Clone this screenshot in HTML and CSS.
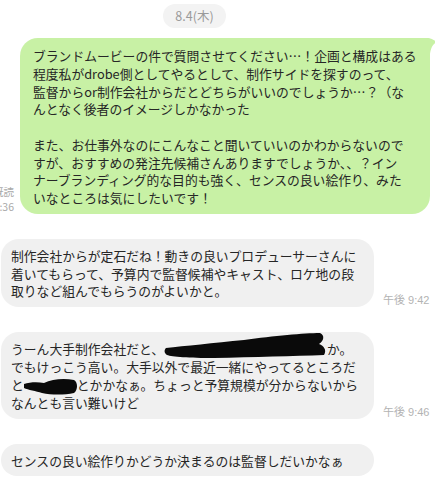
FILE: index.html
```html
<!DOCTYPE html>
<html lang="ja">
<head>
    <meta charset="UTF-8">
    <meta name="viewport" content="width=device-width, initial-scale=1.0">
    <title>トーク</title>
    <link rel="stylesheet" href="styles.css">
</head>
<body>
    <div class="chat">
        <div class="date-row"><span class="date">8.4(木)</span></div>

        <div class="row sent">
            <div class="read">既読<br>9:36</div>
            <div class="bubble green">
                <svg class="tail" width="16" height="16" viewBox="0 0 16 16"><path d="M0 0 H6 C10 0 13 2 16 4 C12 6 10 9 9 16 H0 Z"/></svg>
                ブランドムービーの件で質問させてください…！企画と構成はある<br>
                程度私がdrobe側としてやるとして、制作サイドを探すのって、<br>
                監督からor制作会社からだとどちらがいいのでしょうか…？（な<br>
                んとなく後者のイメージしかなかった<br>
                <br>
                また、お仕事外なのにこんなこと聞いていいのかわからないので<br>
                すが、おすすめの発注先候補さんありますでしょうか、、？イン<br>
                ナーブランディング的な目的も強く、センスの良い絵作り、みた<br>
                いなところは気にしたいです！
            </div>
        </div>

        <div class="row recv">
            <div class="bubble gray">
                制作会社からが定石だね！動きの良いプロデューサーさんに<br>
                着いてもらって、予算内で監督候補やキャスト、ロケ地の段<br>
                取りなど組んでもらうのがよいかと。
            </div>
            <div class="time">午後 9:42</div>
        </div>

        <div class="row recv">
            <div class="bubble gray">
                うーん大手制作会社だと、<svg class="redact" width="163" height="18"><path d="M2 8 C20 6 50 3 80 0 C110 -4 140 -7 156 -7 C161 -5 160 1 155 4 C160 6 163 10 160 15 C130 16 90 17 50 18 C25 18 8 17 3 15 C0 13 0 10 2 8 Z"/></svg>か。<br>
                でもけっこう高い。大手以外で最近一緒にやってるところだ<br>
                と<svg class="redact" width="53" height="18"><path d="M0 8 C6 6 14 6 20 7 C28 3 40 2 50 4 C54 6 54 14 50 17 C40 19 28 19 18 17 C12 15 4 14 0 12 Z"/></svg>とかかなぁ。ちょっと予算規模が分からないから<br>
                なんとも言い難いけど
            </div>
            <div class="time">午後 9:46</div>
        </div>

        <div class="row recv">
            <div class="bubble gray">
                センスの良い絵作りかどうか決まるのは監督しだいかなぁ
            </div>
        </div>
    </div>
</body>
</html>
```

FILE: styles.css
```css
body {
    margin: 0;
    background-color: #fff;
    color: #262626;
    font-family: "Noto Sans CJK JP", sans-serif;
    overflow: hidden;
}
.chat {
    display: flex;
    flex-direction: column;
    padding-top: 4px;
}
.date-row {
    display: flex;
    justify-content: center;
    padding-right: 46px;
}
.date {
    height: 24px;
    line-height: 24px;
    padding: 0 12px;
    border-radius: 12px;
    background-color: #f3f3f3;
    color: #9a9a9a;
    font-size: 12.5px;
}
.row {
    display: flex;
    align-items: flex-end;
}
.row.sent {
    margin: 10px 9px 0 -10px;
}
.row.recv {
    margin: 25px 0 0 1px;
}
.read {
    width: 24px;
    flex-shrink: 0;
    margin-right: 6px;
    font-size: 10.5px;
    line-height: 15px;
    color: #aaa;
    text-align: right;
    white-space: nowrap;
}
.bubble {
    position: relative;
    border-radius: 18px;
    font-size: 12.8px;
    line-height: 17.75px;
    white-space: nowrap;
}
.green {
    flex: 1;
    padding: 9px 13px 7px;
    background-color: #c8f1a5;
    border-top-right-radius: 2px;
}
.tail {
    position: absolute;
    top: 0;
    right: -7px;
    fill: #c8f1a5;
}
.gray {
    width: 373px;
    box-sizing: border-box;
    padding: 8px 10px 7px;
    background-color: #f0f0f0;
}
.time {
    margin-left: 9px;
    font-family: "Liberation Sans", "Noto Sans CJK JP", sans-serif;
    font-size: 11px;
    line-height: 14px;
    color: #b3b3b3;
}
.redact {
    vertical-align: top;
    overflow: visible;
    fill: #0a0a0a;
}
```
